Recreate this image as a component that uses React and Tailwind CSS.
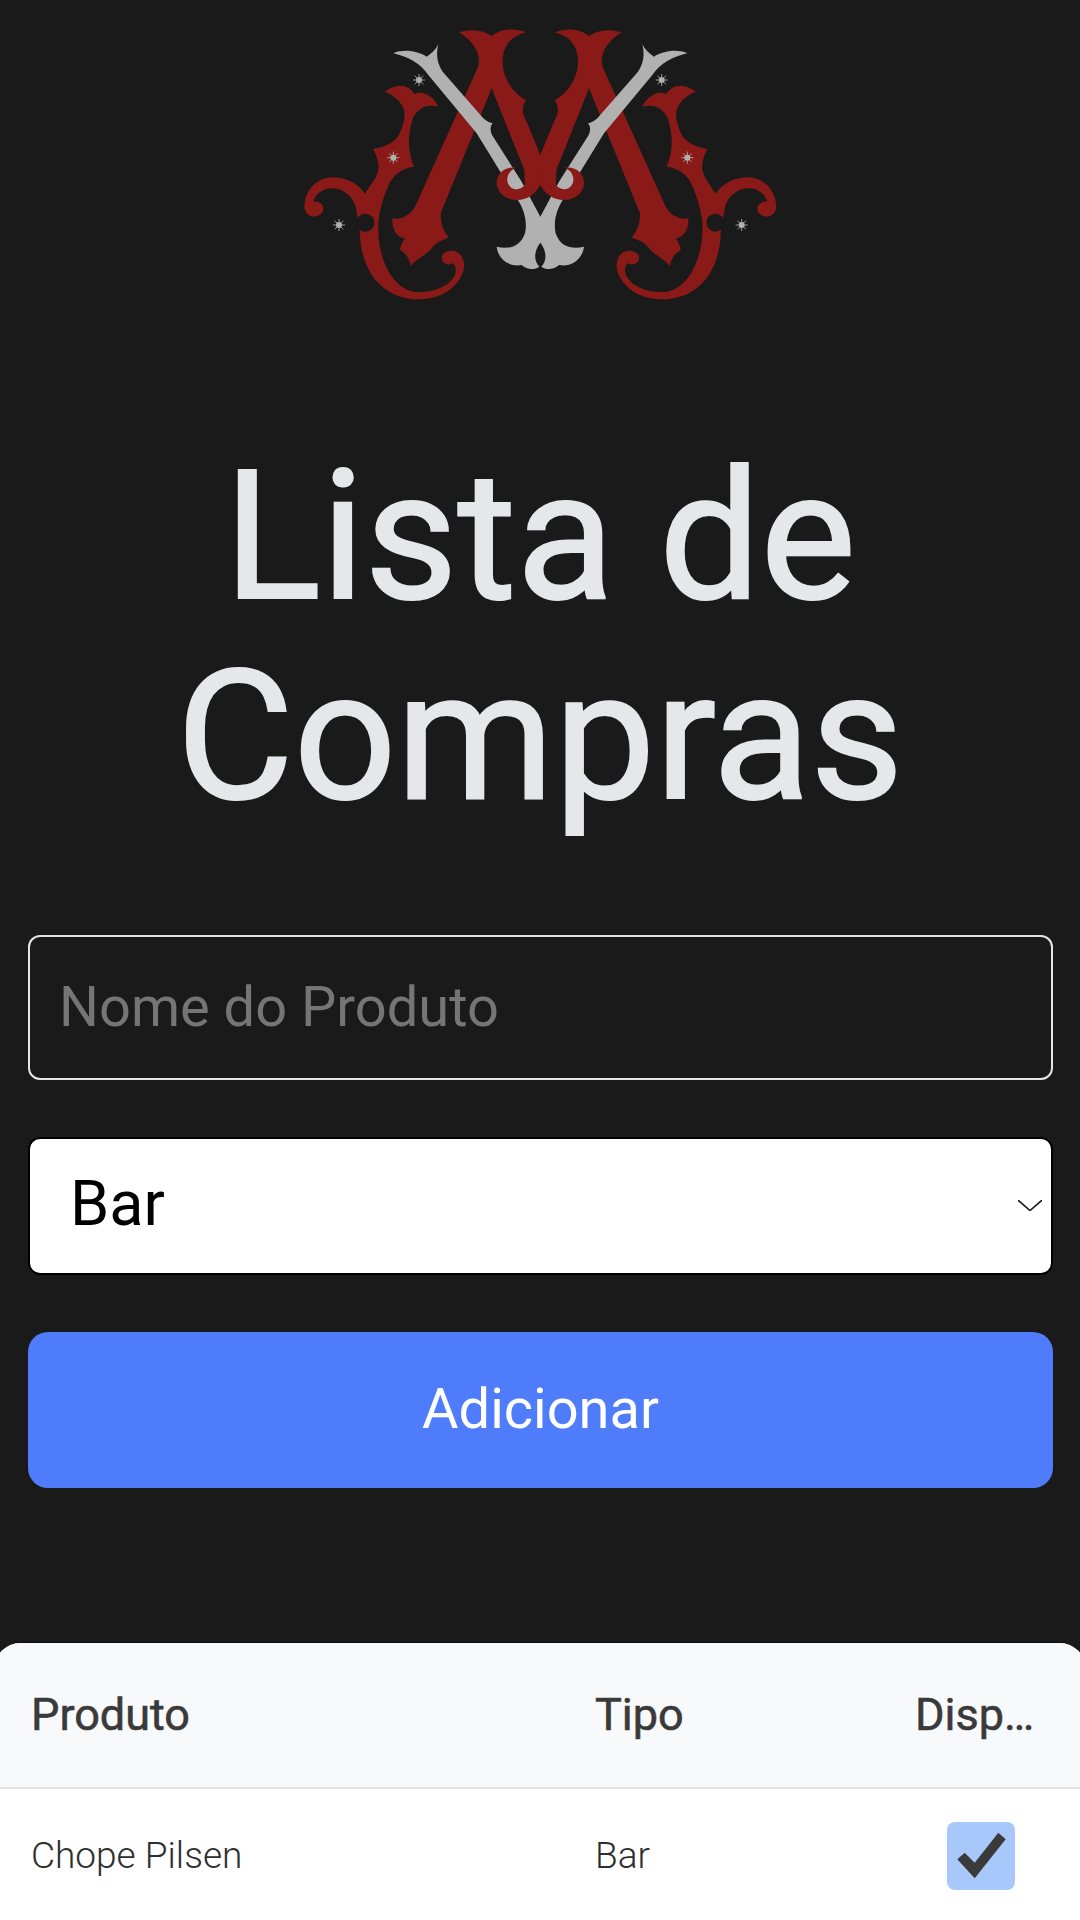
const RED = '#8a1a18'
const GREY = '#b1b1b1'
const BG = '#1a1a1a'

const Star = ({ x, y }) => (
  <g transform={`translate(${x} ${y})`} stroke={GREY} strokeWidth="2.5" strokeLinecap="round">
    <path d="M-17 0H17M0 -17V17M-12 -12L12 12M-12 12L12 -12" />
    <circle r="9" fill={GREY} stroke="none" />
  </g>
)

// left half of the monogram, the right half is the same thing mirrored
const LogoHalf = () => (
  <g>
    <path
      fill={RED}
      d="M537 97C575 85 610 90 635 108C660 88 700 82 737 97C690 110 668 140 668 185C668 235 700 280 738 300C725 318 725 340 738 360L781 465L783 470L783 550L781 555L735 560L733 510L635 265L482 640C482 670 490 695 507 712C485 722 470 725 455 745C440 765 410 775 392 798C388 775 378 760 360 750C362 735 368 725 375 715C355 712 335 695 337 655C365 660 390 645 405 620L590 210C608 175 590 130 537 97Z"
    />
    <path
      fill={RED}
      d="M315 275C345 250 385 250 403 282C425 270 460 285 475 320C440 310 412 325 400 352C386 392 378 445 402 500C365 505 335 525 322 565C306 605 292 650 295 700C298 770 330 860 400 875C450 880 505 865 525 825C530 808 527 797 518 790C500 800 478 785 487 765C498 748 535 745 548 775C565 815 530 860 490 882C440 905 370 905 320 870C265 835 240 760 240 700L228 625C220 590 190 562 150 565C125 568 105 585 100 605C125 602 138 625 125 640C108 658 75 650 73 620C76 565 115 530 165 532C205 535 240 555 255 582C270 555 295 530 296 500C295 480 288 465 280 447C320 440 355 425 365 385C372 365 376 345 372 330C365 305 340 285 315 275Z"
    />
    <circle cx="256" cy="668" r="27" fill={BG} />
    <path
      fill={GREY}
      d="M340 160C375 145 415 155 440 170C455 160 467 150 475 133C468 160 470 190 488 215L610 355C620 365 630 368 638 370C630 380 630 392 636 405L725 545L781 650L783 654L783 724L781 728C760 755 762 785 778 800C765 810 740 810 725 795C690 802 655 780 650 740C680 748 720 745 735 700C742 670 735 630 710 595L590 400L445 225C420 190 385 170 340 160Z"
    />
    <path
      fill={RED}
      d="M708 503C675 498 650 520 650 548C650 580 680 602 715 600C745 598 768 580 781 555L783 550L783 500L733 505C745 540 738 562 715 567C695 572 680 555 682 535C684 520 692 510 708 503Z"
    />
    <Star x={417} y={240} />
    <Star x={340} y={473} />
    <Star x={177} y={675} />
  </g>
)

const Logo = () => (
  <svg viewBox="0 0 1560 960" className="block w-[520px] h-[320px] mx-auto">
    <LogoHalf />
    <g transform="translate(1562 0) scale(-1 1)">
      <LogoHalf />
    </g>
  </svg>
)

export default function App() {
  return (
    <div className="flex flex-col h-[1920px] overflow-hidden bg-[#1a1a1a] font-['Roboto',sans-serif]">
      <Logo />

      <h1 className="mt-[117px] text-center text-[180px] leading-[200px] font-normal text-[#e5e7eb] [-webkit-text-stroke:2px_#e5e7eb]">
        Lista de
        <br />
        Compras
      </h1>

      <form className="mt-[98px] flex flex-col pl-7 pr-[27px]">
        <input
          type="text"
          placeholder="Nome do Produto"
          className="h-[145px] w-full rounded-xl border-2 border-[#e5e5e5] bg-transparent px-[29px] pb-[2px] text-[56px] font-normal text-white placeholder:text-[#757575] outline-none"
        />
        <div className="relative mt-[57px]">
          <select className="block h-[138px] w-full appearance-none rounded-xl border-2 border-black bg-white pl-[40px] pb-[3px] text-[63px] font-normal text-black outline-none">
            <option>Bar</option>
            <option>Mercado</option>
          </select>
          <svg viewBox="0 0 24 11" className="absolute right-[11px] top-[63px] h-[11px] w-[24px]" fill="none" stroke="#1a1a1a" strokeWidth="1.6" strokeLinecap="round">
            <path d="M0.5 0.5L12 10.5L23.5 0.5" />
          </svg>
        </div>
        <button type="button" className="mt-[57px] h-[156px] w-full rounded-[20px] bg-[#4f7cfa] pb-[2px] text-[56px] font-normal text-white">
          Adicionar
        </button>
      </form>

      <section className="-mx-[5px] mt-[155px] flex-1 rounded-t-[25px] bg-white overflow-hidden shadow-[0_-1px_0_#0d0d0d]">
        <div className="grid h-[146px] grid-cols-[564px_320px_1fr] items-center border-b-2 border-[#e2e2e2] bg-[#f8f9fb] pl-9 text-[45px] font-normal text-[#3a3a3a] [-webkit-text-stroke:0.6px_#3a3a3a]">
          <span>Produto</span>
          <span>Tipo</span>
          <span>Disp…</span>
        </div>
        <div className="grid h-[134px] grid-cols-[564px_320px_1fr] items-center pl-9 text-[37px] font-light text-[#2e2e2e]">
          <span>Chope Pilsen</span>
          <span>Bar</span>
          <span className="ml-[32px] flex h-[68px] w-[68px] items-center justify-center rounded-lg bg-[#a8c7fa]">
            <svg viewBox="0 0 68 68" className="h-[68px] w-[68px]">
              <path fill="#3a3a3a" d="M10.3 37.3L17.7 30.7L27.7 40.7L51.3 10.7L58.7 17.3L27.7 56.3Z" />
            </svg>
          </span>
        </div>
      </section>
    </div>
  )
}
